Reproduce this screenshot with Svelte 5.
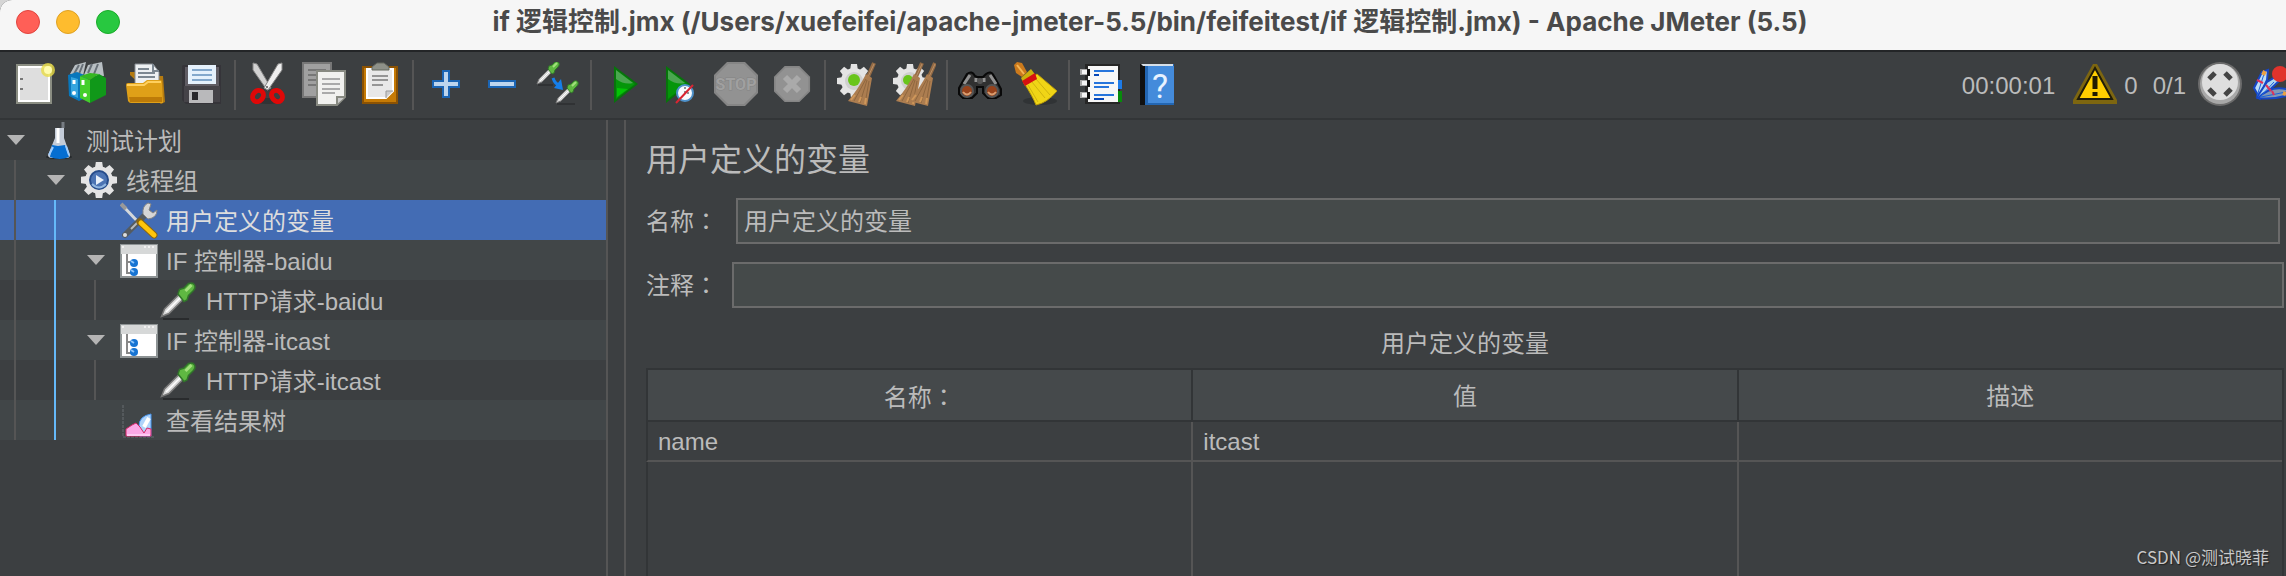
<script lang="ts">
  type TreeNode = { label: string; depth: number; icon: string; open?: boolean };

  const toolbar = [
    [['new', '新建'], ['templates', '模板'], ['open', '打开'], ['save', '保存']],
    [['cut', '剪切'], ['copy', '复制'], ['paste', '粘贴']],
    [['plus', '展开'], ['minus', '折叠'], ['toggle', '切换']],
    [['start', '启动'], ['startNow', '不停顿开始'], ['stop', '停止'], ['shutdown', '关闭']],
    [['clear', '清除'], ['clearAll', '清除全部']],
    [['search', '查找'], ['reset', '重置搜索']],
    [['functions', '函数助手'], ['help', '帮助']]
  ];

  const nodes: TreeNode[] = [
    { label: '测试计划', depth: 0, icon: 'flask', open: true },
    { label: '线程组', depth: 1, icon: 'threads', open: true },
    { label: '用户定义的变量', depth: 2, icon: 'tools' },
    { label: 'IF 控制器-baidu', depth: 2, icon: 'controller', open: true },
    { label: 'HTTP请求-baidu', depth: 3, icon: 'sampler' },
    { label: 'IF 控制器-itcast', depth: 2, icon: 'controller', open: true },
    { label: 'HTTP请求-itcast', depth: 3, icon: 'sampler' },
    { label: '查看结果树', depth: 2, icon: 'listener' }
  ];

  let selected = $state(2);
  let name = $state('用户定义的变量');
  let comment = $state('');

  const variables = [{ name: 'name', value: 'itcast', description: '' }];
  const teeth = [0, 45, 90, 135, 180, 225, 270, 315];
</script>

{#snippet pipette()}
  <path d="M1 23 3 18 14 7l3 3L6 21z" fill="#d8d8d8" stroke="#777" stroke-width="1" />
  <path d="M4 20 15 9" stroke="#fff" stroke-width="1" />
  <path d="m13 5 3-1 3-3q3-1 4 1t-1 4l-3 3-1 3-2 1-4-5z" fill="#5fb842" stroke="#31752a" stroke-width="1" />
  <path d="m17 6 4-4" stroke="#a2e07c" stroke-width="2" />
{/snippet}

{#snippet gear()}
  {#each teeth as angle}
    <path d="M-3-17h6l1 7H-4z" fill="#e4e4e4" transform="rotate({angle})" />
  {/each}
  <circle r="13" fill="#e4e4e4" />
  <circle r="9" fill="#cfcfcf" />
{/snippet}

{#snippet besom()}
  <path d="M26 0 19 16" stroke="#946b45" stroke-width="4" />
  <path d="M26 1 19 16" stroke="#bb9067" stroke-width="1" />
  <path d="M18 11 24 15 19 43 0 38Q11 25 18 11z" fill="#ac7d50" />
  <path d="M18 16 6 38M19 17l-7 23M21 18l-4 23" stroke="#8f673f" stroke-width="1" fill="none" />
  <path d="m3 37 4-5m4 7 2-5m4 7 1-6" stroke="#cf975a" stroke-width="2" />
{/snippet}

{#snippet octagon()}
  <path d="M13 0h18l13 13v18L31 44H13L0 31V13z" fill="#858585" />
  <path d="M14 2h16l12 12v16L30 42H14L2 30V14z" fill="#929292" />
{/snippet}

{#snippet toolIcon(id: string)}
  <svg width="44" height="44" viewBox="0 0 44 44" aria-hidden="true">
    {#if id === 'new'}
      <path d="M4 2h36v40H4z" fill="#8a8d82" />
      <path d="M6 4h32v36H6z" fill="#fff" />
      <path d="M8 6h28v32H8z" fill="#dedede" />
      <path d="M8 17h3M8 27h3" stroke="#777" stroke-width="2" />
      <circle cx="36" cy="8" r="7" fill="#e8dc45" opacity=".8" />
      <circle cx="36" cy="8" r="4" fill="#fffcae" />
    {:else if id === 'templates'}
      <path d="m2 12 5-9 11-3-3 14zM16 13l4-10 14-3 2 14z" fill="#b8bfc3" />
      <path d="m6 12 5-9m0 9 4-10m5 9 4-9m2 10 4-10" stroke="#687078" stroke-width="2" />
      <path d="m0 13 9-3 10 4v21l-8 4-10-5z" fill="#0877bc" />
      <path d="M3 15v18l7 3V17z" fill="#35a5df" />
      <path d="M12 14 22 18v23l-10-5z" fill="#44cf2c" />
      <path d="m22 18 9-6 7 4v17l-16 8z" fill="#109819" />
      <path d="m12 14 10-3 9 1-9 6z" fill="#35b821" />
      <path d="M15 18v5m-9-5v4" stroke="#fff" stroke-width="3" />
      <circle cx="17" cy="33" r="2" fill="#fff" /><circle cx="6" cy="31" r="2" fill="#fff" />
    {:else if id === 'open'}
      <path d="M6 13V10h15l4 4h14l2 26-4 2z" fill="#b57b10" />
      <path d="M11 2h18l6 8v14H11z" fill="#edf0f2" stroke="#858b91" />
      <path d="M29 2v7h6M14 7h11m-11 4h17m-17 4h17" stroke="#7c8791" stroke-width="2" fill="none" />
      <path d="M2 23q0-2 2-2h15l4-3h13q2 0 2 2l1 21H7q-2 0-3-2z" fill="#dfa018" />
      <path d="M3 23h17l4-3h13" stroke="#ffd05e" stroke-width="2" fill="none" />
      <path d="M5 35h33v5H6z" fill="#bd7b08" />
    {:else if id === 'save'}
      <path d="M3 3h38v39H6l-4-4V4z" fill="#353439" />
      <path d="M5 5h34v34H5z" fill="#605d64" />
      <path d="M8 3h28v19H8z" fill="#e5f1fc" />
      <path d="M12 8h20m-20 5h20m-20 5h20" stroke="#83a8cc" stroke-width="2" />
      <path d="M4 24h36v16H4z" fill="#454348" />
      <path d="M9 28h24v13H9z" fill="#b9b9bb" /><path d="M12 30h6v8h-6z" fill="#29282c" />
    {:else if id === 'cut'}
      <ellipse cx="22" cy="39" rx="15" ry="3" fill="#303335" />
      <path d="m7 1 4 1 14 24-4 2L7 8z" fill="#d3d3d3" stroke="#888" />
      <path d="m36 1-4 1-14 24 4 2L36 8z" fill="#efefef" stroke="#888" />
      <ellipse cx="12" cy="34" rx="5" ry="6" fill="none" stroke="#df0808" stroke-width="5" transform="rotate(40 12 34)" />
      <ellipse cx="31" cy="34" rx="5" ry="6" fill="none" stroke="#df0808" stroke-width="5" transform="rotate(-40 31 34)" />
      <circle cx="21" cy="25" r="1" fill="#555" />
    {:else if id === 'copy'}
      <path d="M1 1h28v34H1z" fill="#a0a0a0" stroke="#777" stroke-width="2" />
      <path d="M6 8h18M6 13h18M6 18h18M6 23h18" stroke="#777" stroke-width="2" />
      <path d="M15 9h28v26l-8 8H15z" fill="#f1f1ef" stroke="#888a82" stroke-width="2" />
      <path d="M20 17h18m-18 5h18m-18 5h18m-18 4h13" stroke="#aaa" stroke-width="2" />
      <path d="M35 42v-7h8" fill="#ccc" stroke="#888a82" stroke-width="2" />
    {:else if id === 'paste'}
      <path d="M5 5h34v36H5z" fill="#c57a05" stroke="#8b5203" stroke-width="2" />
      <path d="M9 7h26v22l-7 7H9z" fill="#e8e8e8" stroke="#fff" stroke-width="2" />
      <path d="M28 36v-7h7" fill="#ccc" stroke="#999" />
      <path d="M14 14h16m-16 4h16m-16 5h11" stroke="#959595" stroke-width="2" />
      <path d="M14 8V5l5-4h7l5 4v3z" fill="#8e9189" stroke="#65685f" />
    {:else if id === 'plus'}
      <path d="M18 8h8v10h10v8H26v10h-8V26H8v-8h10z" fill="#1b65b4" />
      <path d="M20 10h4v10h10v4H24v10h-4V24H10v-4h10z" fill="#bdd5ed" />
    {:else if id === 'minus'}
      <path d="M8 18h28v8H8z" fill="#1b65b4" /><path d="M10 20h24v4H10z" fill="#bdd5ed" />
    {:else if id === 'toggle'}
      <path d="M2 23h15m4 19h18" stroke="#242628" />
      <g transform="translate(0 -1)">{@render pipette()}</g>
      <g transform="translate(19 18)">{@render pipette()}</g>
      <path d="M17 16q2 6 6 7" fill="none" stroke="#167ee9" stroke-width="3" />
      <path d="m25 17 2 11-9-2z" fill="#167ee9" />
    {:else if id === 'start'}
      <path d="M12 4 36 22 12 41z" fill="#07740b" />
      <path d="M14 8 33 22 14 37z" fill="#05960a" />
      <path d="m14 8 17 13q-9 2-17-4z" fill="#4ba650" />
      <path d="m15 26 11 1-11 8z" fill="#04c405" />
    {:else if id === 'startNow'}
      <path d="M8 4 32 22 8 41z" fill="#07740b" />
      <path d="M10 8 29 22 10 37z" fill="#05960a" />
      <path d="m10 8 17 13q-9 2-17-4z" fill="#4ba650" />
      <circle cx="27" cy="31" r="8" fill="#f8fbff" stroke="#4e91ca" stroke-width="2" />
      <path d="M27 25v6h5" stroke="#8c9398" stroke-width="2" fill="none" stroke-dasharray="2" />
      <path d="m18 41 17-18" stroke="#d92533" stroke-width="2" />
    {:else if id === 'stop'}
      {@render octagon()}
      <text x="22" y="28" text-anchor="middle" class="stop-text">STOP</text>
    {:else if id === 'shutdown'}
      <g transform="translate(4 4) scale(.82)">{@render octagon()}</g>
      <path d="m15 15 14 14m0-14L15 29" stroke="#aaa" stroke-width="6" />
    {:else if id === 'clear'}
      <g transform="translate(18 19)">{@render gear()}</g>
      <circle cx="18" cy="18" r="6" fill="#69c51b" />
      <g transform="translate(12 1)">{@render besom()}</g>
    {:else if id === 'clearAll'}
      <g transform="translate(18 19)">{@render gear()}</g>
      <circle cx="16" cy="18" r="5" fill="#69c51b" />
      <g transform="translate(4 1)">{@render besom()}</g>
      <g transform="translate(17 1)">{@render besom()}</g>
    {:else if id === 'search'}
      <path d="m1 26 8-14q5-4 8 2l2 1h6l3-3q5-4 8 2l7 13v6l-5 3h-8l-5-5v-6h-6v6l-5 5H5l-4-4z" fill="#303030" stroke="#090909" stroke-width="2" />
      <path d="m6 22 6-9m20 0 6 9m-20-6v4m8-4v4" stroke="#929292" stroke-width="3" />
      <circle cx="9" cy="29" r="6" fill="#97421b" stroke="#555" stroke-width="2" />
      <circle cx="34" cy="29" r="6" fill="#97421b" stroke="#555" stroke-width="2" />
      <path d="M5 30q4 5 8 0M30 30q4 5 8 0" stroke="#da9d70" stroke-width="2" fill="none" />
      <circle cx="22" cy="19" r="3" fill="#555" />
    {:else if id === 'reset'}
      <ellipse cx="26" cy="39" rx="17" ry="4" fill="#303335" />
      <path d="m3 0 5 1 5 9-5 5-6-4-2-8z" fill="#cc7a1c" /><path d="m3 3 7 9" stroke="#f5b554" stroke-width="2" />
      <path d="m7 16 10-9 6 8-12 9z" fill="#cbb00c" />
      <path d="m10 21 13-9 20 17q-10 12-21 14-3-8-12-22z" fill="#f0d516" stroke="#ba9b09" />
      <path d="m14 23 10 17m-6-20 13 16M22 17l14 16" stroke="#cfb40e" />
      <path d="m8 19 13-8 2 6-12 7z" fill="#d61111" />
    {:else if id === 'functions'}
      <path d="M5 2h35v40H5z" fill="#262626" /><path d="M8 4h30v36H8z" fill="#f7f7f7" />
      <path d="M38 18h4v9h-4z" fill="#1d7be8" /><path d="M38 29h4v11h-4z" fill="#078b0b" />
      <path d="M14 9h20m-20 12h20m-20 4h15m-15 8h20" stroke="#2775dc" stroke-width="2" />
      <path d="M14 13h5m-5 24h10" stroke="#0748b8" stroke-width="2" />
      {#each [7, 18, 30] as y}
        <path d="M0 {y}h9v6H0z" fill="#aaa" /><path d="M2 {y + 1}h6v4H2z" fill="#f4f4f4" /><path d="M7 {y}h3v7H7z" fill="#111" />
      {/each}
    {:else if id === 'help'}
      <path d="M4 2h5v41H4z" fill="#111" /><path d="M9 2h29v41H9z" fill="#2366b2" />
      <path d="M12 4h26v37H12z" fill="#448bdb" /><path d="M5 2h32v2H7z" fill="#d6dfe8" />
      <text x="24" y="36" text-anchor="middle" class="help-text">?</text>
    {/if}
  </svg>
{/snippet}

{#snippet treeIcon(id: string)}
  <svg width="40" height="40" viewBox="0 0 40 40" aria-hidden="true">
    {#if id === 'flask'}
      <ellipse cx="19" cy="37" rx="13" ry="2" fill="#24272a" />
      <path d="M15 8h9v10l6 17q0 3-3 3H12q-4 0-4-3l7-17z" fill="#c4ccd8" />
      <path d="m12 25 6 1 7-1 4 12q-9 4-19 0z" fill="#066ed1" />
      <path d="m13 27-4 8m17-9 3 9" stroke="#9dccff" stroke-width="2" />
      <path d="M23 2v6" stroke="#777d83" stroke-width="3" /><path d="M18 8v15" stroke="#fff" stroke-width="3" />
    {:else if id === 'threads'}
      <g transform="translate(19 20) scale(1.06)">{@render gear()}</g>
      <circle cx="19" cy="20" r="9" fill="#4c74b3" stroke="#274d8b" stroke-width="2" />
      <path d="m16 15 8 5-8 5z" fill="#e8f0fa" /><path d="M12 24q7 7 14 0" stroke="#91b6e0" stroke-width="2" fill="none" />
    {:else if id === 'tools'}
      <path d="m2 5 18 19" stroke="#d4d8db" stroke-width="3" /><path d="m1 4 5 5" stroke="#999" stroke-width="4" />
      <path d="M5 35 28 12" stroke="#555b60" stroke-width="6" stroke-linecap="round" />
      <path d="M23 14q-1-8 5-11l3 1-2 6 4 3 4-3q0 8-9 9z" fill="#d6d6d6" stroke="#858585" />
      <path d="m20 20-9 9" stroke="#b7bbbe" stroke-width="2" /><circle cx="5" cy="35" r="2" fill="#ddd" />
      <path d="m20 22 14 13" stroke="#8b6610" stroke-width="7" stroke-linecap="round" />
      <path d="m21 23 13 12" stroke="#ffc50b" stroke-width="5" stroke-linecap="round" />
    {:else if id === 'controller'}
      <path d="M0 4h38v34H0z" fill="#8d9394" /><path d="M2 6h34v30H2z" fill="#fff" />
      <path d="M1 5h36v9H1z" fill="#d6d8d8" /><path d="M24 7h10M3 6v3" stroke="#f1f1f1" stroke-width="2" stroke-dasharray="2" />
      <path d="M7 14v19h4M7 22h4" stroke="#888" stroke-width="2" fill="none" />
      <circle cx="14" cy="23" r="4" fill="#1674d3" /><circle cx="14" cy="32" r="4" fill="#1674d3" />
      <path d="m11 21 3 2m-3 7 3 2" stroke="#8ec6fb" stroke-width="2" />
    {:else if id === 'sampler'}
      <path d="M3 39h26" stroke="#292b2d" stroke-width="2" />
      <g transform="translate(0 2) scale(1.5)">{@render pipette()}</g>
    {:else if id === 'listener'}
      <path d="M3 5v32h32" stroke="#696d70" stroke-width="1" fill="none" stroke-dasharray="3 1" />
      <path d="M19 26q0-10 12-12v22H20z" fill="#afd4fb" stroke="#4795ef" /><path d="m24 27 5-9" stroke="#fff" stroke-width="4" />
      <path d="M6 36v-7l6-4 4-2 4 4 4 6 3-5 4 1v7z" fill="#fba8e6" stroke="#d62968" />
      <path d="M7 35h23" stroke="#fdc9f2" stroke-width="2" />
    {/if}
  </svg>
{/snippet}

<div class="window">
  <header class="title-bar">
    <div class="lights">
      <button class="light close" aria-label="关闭窗口"></button>
      <button class="light minimize" aria-label="最小化"></button>
      <button class="light zoom" aria-label="缩放"></button>
    </div>
    <h1>if 逻辑控制.jmx (/Users/xuefeifei/apache-jmeter-5.5/bin/feifeitest/if 逻辑控制.jmx) - Apache JMeter (5.5)</h1>
  </header>

  <div class="toolbar">
    {#each toolbar as group, i}
      {#if i > 0}<span class="separator"></span>{/if}
      {#each group as [id, label]}
        <button class="tool" aria-label={label}>{@render toolIcon(id)}</button>
      {/each}
    {/each}

    <div class="status">
      <span class="time">00:00:01</span>
      <button class="warning" aria-label="日志">
        <svg width="44" height="44" viewBox="0 0 44 44" aria-hidden="true">
          <path d="M20 2h4l20 36v4H0v-4z" fill="#7d6610" />
          <path d="m22 6 17 31H5z" fill="#ffce00" stroke="#201c08" stroke-width="2" />
          <path d="M22 14v13" stroke="#211b00" stroke-width="5" /><path d="M22 30v4" stroke="#211b00" stroke-width="5" />
        </svg>
      </button>
      <span class="errors">0</span>
      <span class="threads">0/1</span>
      <svg class="remote" width="44" height="44" viewBox="0 0 44 44" aria-hidden="true">
        <circle cx="22" cy="22" r="22" fill="#6c6c6c" /><circle cx="22" cy="22" r="20" fill="#a8a8a8" />
        <circle cx="22" cy="20" r="18" fill="#dedede" />
        <path d="m11 17 6-6m10 0 6 6M11 27l6 6m10 0 6-6" stroke="#444" stroke-width="5" />
      </svg>
      <svg width="33" height="44" viewBox="0 0 33 44" aria-hidden="true">
        <path d="M1 26 9 10l6-2-1 10-8 17z" fill="#bcdcf6" stroke="#1646c5" stroke-width="2" />
        <path d="m4 35 10-15 10-6 2 5-19 18z" fill="#b1d5ee" stroke="#1646c5" stroke-width="2" />
        <path d="M5 36q14-14 31-8v5q-16 5-31 3z" fill="#8198b5" stroke="#1646c5" stroke-width="2" />
        <path d="m4 34 7-22M7 35l14-15M8 35l25-5" stroke="#1b62db" stroke-width="1" />
        <path d="m4 18 6 3m3 2 5 6m1 0 2 4" stroke="#df315a" stroke-width="2" />
        <path d="m10 13 2-4m18 22 3 1" stroke="#eaa143" stroke-width="4" />
        <circle cx="27" cy="12" r="8" fill="#e1332c" />
      </svg>
    </div>
  </div>

  <main>
    <ul class="tree" role="tree">
      {#each nodes as node, i}
        <li role="treeitem" aria-selected={selected === i} class:alt={i % 2 === 1} class:selected={selected === i}>
          {#each Array(node.depth) as _, level}
            <span class="guide" class:active={level === 1}></span>
          {/each}
          <span class="arrow" class:open={node.open}></span>
          <button class="node" onclick={() => (selected = i)}>
            {@render treeIcon(node.icon)}
            <span class="label">{node.label}</span>
          </button>
        </li>
      {/each}
    </ul>

    <div class="splitter"></div>

    <section class="editor">
      <h2>用户定义的变量</h2>
      <div class="field name-field">
        <label for="name">名称<span class="colon">：</span></label>
        <input id="name" type="text" bind:value={name} />
      </div>
      <div class="field">
        <label for="comment">注释<span class="colon">：</span></label>
        <input id="comment" type="text" bind:value={comment} />
      </div>
      <p class="caption" id="caption">用户定义的变量</p>
      <div class="table-wrap">
        <table aria-labelledby="caption">
          <thead>
            <tr>
              <th>名称<span class="colon">：</span></th>
              <th>值</th>
              <th>描述</th>
            </tr>
          </thead>
          <tbody>
            {#each variables as variable}
              <tr class="row">
                <td>{variable.name}</td>
                <td>{variable.value}</td>
                <td>{variable.description}</td>
              </tr>
            {/each}
            <tr class="rest"><td></td><td></td><td></td></tr>
          </tbody>
        </table>
      </div>
    </section>
  </main>

  <div class="watermark">CSDN @测试晓菲</div>
</div>

<style>
  :global(body) {
    margin: 0;
    background: #d5d5d5;
  }

  .window {
    position: relative;
    display: flex;
    flex-direction: column;
    min-height: 100vh;
    overflow: hidden;
    box-sizing: border-box;
    border-top-left-radius: 12px;
    background: #3c3f41;
    color: #bbb;
    font: 24px/32px "Liberation Sans", "Noto Sans CJK SC", sans-serif;
  }

  button {
    padding: 0;
    border: none;
    background: none;
    color: inherit;
    font: inherit;
  }

  svg {
    display: block;
    flex: none;
  }

  .title-bar {
    display: flex;
    align-items: center;
    height: 50px;
    padding: 0 16px;
    border-bottom: 2px solid #232527;
    background: #f6f6f6;
  }

  .lights {
    display: flex;
    gap: 16px;
    width: 104px;
    padding-bottom: 6px;
  }

  .light {
    width: 24px;
    height: 24px;
    border: 1px solid #e0443e;
    border-radius: 50%;
    background: #ff5f57;
  }

  .minimize {
    border-color: #dea123;
    background: #febc2e;
  }

  .zoom {
    border-color: #1aab29;
    background: #28c840;
  }

  h1 {
    flex: 1;
    margin: 0;
    padding: 0 90px 6px 0;
    color: #4a4a4a;
    font: 700 26px/32px Inter, "Noto Sans CJK SC", sans-serif;
    text-align: center;
    white-space: nowrap;
  }

  .toolbar {
    display: flex;
    align-items: flex-start;
    padding: 8px 0 8px 6px;
    border-bottom: 2px solid #323537;
  }

  .tool {
    display: flex;
    justify-content: center;
    width: 56px;
    padding: 2px 0 4px;
  }

  .separator {
    width: 2px;
    height: 50px;
    margin: 0 4px;
    background: #555;
  }

  .status {
    display: flex;
    align-items: center;
    height: 48px;
    margin-left: auto;
  }

  .status span {
    padding-top: 4px;
  }

  .time {
    margin-right: 18px;
  }

  .errors {
    margin: 0 15px 0 7px;
  }

  .threads {
    margin-right: 12px;
  }

  .remote {
    margin-right: 11px;
  }

  .stop-text {
    fill: #a0a0a0;
    stroke: #848484;
    stroke-width: 1;
    paint-order: stroke;
    font: 700 16px Roboto, sans-serif;
  }

  .help-text {
    fill: #e8f2ff;
    font: 34px Roboto, sans-serif;
  }

  main {
    display: flex;
    flex: 1;
  }

  .tree {
    flex: none;
    width: 606px;
    margin: 0;
    padding: 0;
    border-right: 2px solid #555;
    list-style: none;
  }

  .tree li {
    display: flex;
    align-items: center;
    height: 40px;
  }

  .tree .alt {
    background: #414648;
  }

  .tree .selected {
    background: #436cb4;
    color: #ddd;
  }

  .guide {
    width: 24px;
    height: 40px;
    margin-left: 14px;
    border-left: 2px solid #555;
  }

  .guide.active {
    border-color: #65b9f9;
  }

  .arrow {
    width: 18px;
    height: 10px;
    margin: 0 15px 0 7px;
  }

  .arrow.open {
    background: #b4b4b4;
    clip-path: polygon(0 0, 100% 0, 50% 100%);
  }

  .node {
    display: flex;
    flex: 1;
    align-items: center;
    gap: 6px;
    text-align: left;
  }

  .label {
    padding-top: 3px;
  }

  .splitter {
    flex: none;
    width: 16px;
  }

  .editor {
    display: flex;
    flex: 1;
    flex-direction: column;
    padding: 16px 2px 0 20px;
    border-left: 2px solid #555;
  }

  h2 {
    margin: 0 0 14px;
    font-size: 32px;
    font-weight: 400;
    line-height: 48px;
  }

  .field {
    display: flex;
    align-items: center;
    margin-bottom: 18px;
  }

  .name-field {
    padding-right: 4px;
  }

  .name-field input {
    margin-left: 4px;
  }

  label {
    flex: none;
    width: 86px;
  }

  .colon {
    font-family: "Noto Sans CJK TC", sans-serif;
  }

  input {
    flex: 1;
    height: 46px;
    box-sizing: border-box;
    padding: 0 6px 3px;
    border: 2px solid #6b6b6b;
    border-radius: 0;
    background: #454a4a;
    color: #bbb;
    font: inherit;
    outline: none;
  }

  .caption {
    margin: 0 0 8px;
    padding-top: 2px;
    line-height: 32px;
    text-align: center;
  }

  .table-wrap {
    display: flex;
    flex: 1;
  }

  table {
    flex: 1;
    table-layout: fixed;
    width: 100%;
    border-right: 2px solid #323537;
    border-spacing: 0;
  }

  th {
    height: 47px;
    padding: 3px 0 0;
    border: 2px solid #323537;
    border-right: none;
    background: #45494b;
    font-weight: 400;
  }

  td {
    padding: 0 10px;
    border-left: 2px solid #555;
  }

  td:first-child {
    border-left-color: #323537;
  }

  .row td {
    height: 36px;
    padding-top: 2px;
    border-bottom: 2px solid #555;
  }

  .watermark {
    position: absolute;
    right: 17px;
    bottom: 7px;
    color: #c8c8c8;
    font: 17px/24px "Noto Sans CJK SC", sans-serif;
    text-shadow: 1px 1px 1px #222;
  }
</style>
